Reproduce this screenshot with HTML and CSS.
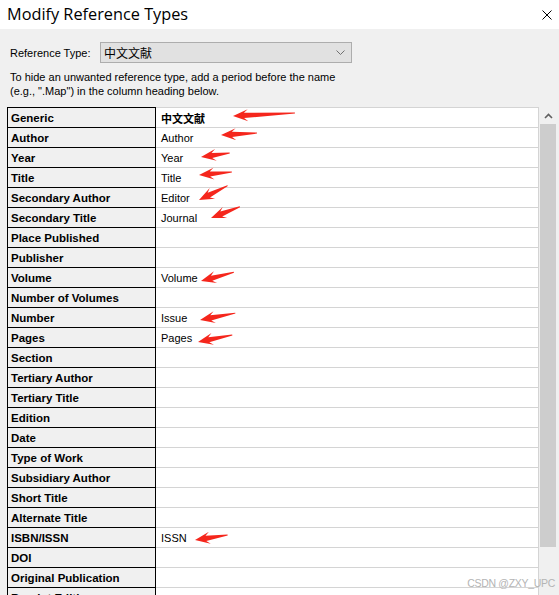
FILE: index.html
```html
<!DOCTYPE html>
<html>
<head>
<meta charset="utf-8">
<link rel="stylesheet" href="styles.css">
</head>
<body>
<div class="window">
  <div class="titlebar">
    <span class="title">Modify Reference Types</span>
    <svg class="close" width="10" height="10" viewBox="0 0 10 10"><path d="M0.5 0.5 L9.5 9.5 M9.5 0.5 L0.5 9.5" stroke="#000" stroke-width="1" fill="none"/></svg>
  </div>
  <div class="content">
    <div class="typerow">
      <span class="label">Reference Type:</span>
      <div class="select">
        <span class="seltext">中文文献</span>
        <svg class="chev" width="9" height="5" viewBox="0 0 9 5"><path d="M0.5 0.5 L4.5 4.5 L8.5 0.5" stroke="#707070" stroke-width="1" fill="none"/></svg>
      </div>
    </div>
    <p class="hint">To hide an unwanted reference type, add a period before the name<br>(e.g., ".Map") in the column heading below.</p>
    <div class="tablewrap">
      <div class="grid">
        <div class="lc first">Generic</div><div class="rc first cjk">中文文献</div>
        <div class="lc">Author</div><div class="rc">Author</div>
        <div class="lc">Year</div><div class="rc">Year</div>
        <div class="lc">Title</div><div class="rc">Title</div>
        <div class="lc">Secondary Author</div><div class="rc">Editor</div>
        <div class="lc">Secondary Title</div><div class="rc">Journal</div>
        <div class="lc">Place Published</div><div class="rc"></div>
        <div class="lc">Publisher</div><div class="rc"></div>
        <div class="lc">Volume</div><div class="rc">Volume</div>
        <div class="lc">Number of Volumes</div><div class="rc"></div>
        <div class="lc">Number</div><div class="rc">Issue</div>
        <div class="lc">Pages</div><div class="rc">Pages</div>
        <div class="lc">Section</div><div class="rc"></div>
        <div class="lc">Tertiary Author</div><div class="rc"></div>
        <div class="lc">Tertiary Title</div><div class="rc"></div>
        <div class="lc">Edition</div><div class="rc"></div>
        <div class="lc">Date</div><div class="rc"></div>
        <div class="lc">Type of Work</div><div class="rc"></div>
        <div class="lc">Subsidiary Author</div><div class="rc"></div>
        <div class="lc">Short Title</div><div class="rc"></div>
        <div class="lc">Alternate Title</div><div class="rc"></div>
        <div class="lc">ISBN/ISSN</div><div class="rc">ISSN</div>
        <div class="lc">DOI</div><div class="rc"></div>
        <div class="lc">Original Publication</div><div class="rc"></div>
        <div class="lc">Reprint Edition</div><div class="rc"></div>
      </div>
      <div class="scrollbar">
        <div class="up">
          <svg width="9" height="6" viewBox="0 0 9 6"><path d="M1 5 L4.5 1.5 L8 5" stroke="#606060" stroke-width="1.6" fill="none"/></svg>
        </div>
        <div class="thumb"></div>
      </div>
    </div>
  </div>
  <svg class="arrows" width="559" height="595" viewBox="0 0 559 595">
    <g fill="#f5261c">
      <polygon transform="translate(233,116) rotate(-2.8)" points="0,0 15,-6 11,-2.6 62,-0.5 62,0.5 11,2.6 15,6"/>
      <polygon transform="translate(221,135) rotate(-3.2)" points="0,0 15,-6 11,-2.6 36,-0.5 36,0.5 11,2.6 15,6"/>
      <polygon transform="translate(201,157) rotate(-8.1)" points="0,0 15,-6 11,-2.6 29,-0.5 29,0.5 11,2.6 15,6"/>
      <polygon transform="translate(199,175) rotate(-5.2)" points="0,0 15,-6 11,-2.6 33,-0.5 33,0.5 11,2.6 15,6"/>
      <polygon transform="translate(199,200) rotate(-26.6)" points="0,0 15,-6 11,-2.6 32,-0.5 32,0.5 11,2.6 15,6"/>
      <polygon transform="translate(211,218) rotate(-21.4)" points="0,0 15,-6 11,-2.6 31,-0.5 31,0.5 11,2.6 15,6"/>
      <polygon transform="translate(201,281) rotate(-15)" points="0,0 15,-6 11,-2.6 34,-0.5 34,0.5 11,2.6 15,6"/>
      <polygon transform="translate(200,320) rotate(-11)" points="0,0 15,-6 11,-2.6 36,-0.5 36,0.5 11,2.6 15,6"/>
      <polygon transform="translate(198,342) rotate(-11.6)" points="0,0 15,-6 11,-2.6 35,-0.5 35,0.5 11,2.6 15,6"/>
      <polygon transform="translate(195,540) rotate(-8.6)" points="0,0 15,-6 11,-2.6 33,-0.5 33,0.5 11,2.6 15,6"/>
    </g>
  </svg>
  <div class="watermark">CSDN @ZXY_UPC</div>
</div>
</body>
</html>
```

FILE: styles.css
```css
html, body {
  margin: 0;
  padding: 0;
  width: 559px;
  height: 595px;
  overflow: hidden;
}
.window {
  position: relative;
  width: 559px;
  height: 595px;
  background: #f0f0f0;
  font-family: "Liberation Sans", Arial, sans-serif;
  color: #000;
  overflow: hidden;
}
.titlebar {
  height: 29px;
  background: #fff;
  display: flex;
  align-items: center;
  justify-content: space-between;
  padding: 0 7px 0 7px;
  box-sizing: border-box;
}
.title {
  font-family: "Open Sans", "Noto Sans", sans-serif;
  font-size: 16.3px;
  line-height: 29px;
  color: #000;
}
.close {
  display: block;
}
.content {
  padding: 13px 0 0 0;
}
.typerow {
  display: flex;
  align-items: center;
  height: 21px;
  padding-left: 10px;
}
.label {
  font-size: 11px;
  width: 90px;
}
.select {
  width: 252px;
  height: 21px;
  box-sizing: border-box;
  background: #e1e1e1;
  border: 1px solid #adadad;
  display: flex;
  align-items: center;
  justify-content: space-between;
  padding: 0 6px 0 3px;
}
.seltext {
  font-family: "Noto Sans CJK SC", sans-serif;
  font-size: 12px;
  line-height: 19px;
}
.chev { display: block; }
.hint {
  margin: 8px 0 0 10px;
  font-size: 11px;
  line-height: 13.5px;
}
.tablewrap {
  margin-top: 9px;
  padding-left: 7px;
  display: flex;
  align-items: flex-start;
}
.grid {
  width: 532px;
  display: grid;
  grid-template-columns: 149px 383px;
}
.lc, .rc {
  height: 20px;
  box-sizing: border-box;
  display: flex;
  align-items: center;
  white-space: nowrap;
  overflow: hidden;
}
.lc {
  background: #f0f0f0;
  border-left: 1px solid #000;
  border-right: 1px solid #000;
  border-bottom: 1px solid #000;
  padding-left: 3px;
  font-weight: bold;
  font-size: 11.5px;
}
.lc.first { border-top: 1px solid #000; height: 21px; }
.rc {
  background: #fff;
  border-right: 1px solid #d4d4d4;
  border-bottom: 1px solid #d4d4d4;
  padding-left: 5px;
  font-size: 11px;
}
.rc.first { border-top: 1px solid #d4d4d4; height: 21px; }
.cjk {
  font-family: "Noto Sans CJK SC", sans-serif;
  font-weight: bold;
  font-size: 11px;
}
.scrollbar {
  width: 16px;
  margin-left: 1px;
  display: flex;
  flex-direction: column;
}
.up {
  height: 17px;
  display: flex;
  align-items: center;
  justify-content: center;
}
.up svg { display: block; }
.thumb {
  height: 423px;
  background: #cdcdcd;
}
.arrows {
  position: absolute;
  left: 0;
  top: 0;
  pointer-events: none;
}
.watermark {
  position: absolute;
  right: 4px;
  top: 577px;
  font-size: 10.5px;
  color: #b4b4b4;
  font-family: "Liberation Sans", Arial, sans-serif;
  letter-spacing: -0.3px;
}
```
